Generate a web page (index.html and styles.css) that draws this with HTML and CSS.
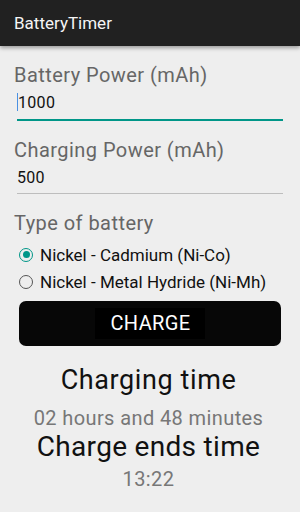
FILE: index.html
```html
<!DOCTYPE html>
<html lang="en">
<head>
<meta charset="UTF-8">
<title>BatteryTimer</title>
<link rel="stylesheet" href="styles.css">
</head>
<body>
<div class="actionbar">BatteryTimer</div>

<div class="content">
  <div class="label">Battery Power (mAh)</div>
  <div class="field active"><span class="cursor"></span>1000</div>

  <div class="label">Charging Power (mAh)</div>
  <div class="field">500</div>

  <div class="label">Type of battery</div>
  <div class="radios">
    <div class="radio checked"><span class="dot"></span>Nickel - Cadmium (Ni-Co)</div>
    <div class="radio"><span class="dot"></span>Nickel - Metal Hydride (Ni-Mh)</div>
  </div>

  <div class="button"><span class="buttontext">CHARGE</span></div>

  <div class="result">
    <div class="big">Charging time</div>
    <div class="small">02 hours and 48 minutes</div>
    <div class="big big2">Charge ends time</div>
    <div class="small small2">13:22</div>
  </div>
</div>
</body>
</html>
```

FILE: styles.css
```css
body{
  margin:0;
  background-color:#eeeeee;
  font-family:Roboto, "Liberation Sans", sans-serif;
  width:300px;
  height:512px;
  overflow:hidden;
}
.actionbar{
  height:46px;
  line-height:46px;
  background-color:#212121;
  color:#f5f5f5;
  font-size:17px;
  padding-left:14px;
  box-shadow:0 2px 4px rgba(0,0,0,0.35);
}
.content{
  padding:0 17px 0 14px;
}
.label{
  color:#666666;
  font-size:20px;
  line-height:24px;
  letter-spacing:0.45px;
  margin-top:17px;
}
.field{
  margin-left:3px;
  font-size:16px;
  line-height:20px;
  color:#111111;
  padding:6px 0 5px 0;
  border-bottom:1px solid #bdbdbd;
  letter-spacing:0.3px;
}
.field.active{
  border-bottom:2px solid #009688;
  padding-bottom:6px;
}
.cursor{
  display:inline-block;
  width:1px;
  height:18px;
  background-color:#4a90e2;
  vertical-align:-3px;
}
.radios{
  margin-top:6px;
}
.radio{
  display:flex;
  align-items:center;
  height:27px;
  font-size:17px;
  color:#111111;
  margin-left:5px;
}
.dot{
  width:12px;
  height:12px;
  border:1.5px solid #555555;
  border-radius:50%;
  margin-right:7px;
  box-sizing:content-box;
  position:relative;
}
.radio.checked .dot{
  border-color:#009688;
}
.radio.checked .dot::after{
  content:"";
  position:absolute;
  left:2.5px;
  top:2.5px;
  width:7px;
  height:7px;
  border-radius:50%;
  background-color:#009688;
}
.button{
  margin:6px 2px 0 5px;
  height:45px;
  background-color:#070707;
  border-radius:7px;
  display:flex;
  align-items:center;
  justify-content:center;
}
.buttontext{
  background-color:#000000;
  color:#ffffff;
  font-size:20px;
  letter-spacing:0.4px;
  padding:5px 14px 5px 15px;
  line-height:21px;
}
.result{
  text-align:center;
  margin-top:16px;
}
.big{
  font-size:27px;
  line-height:36px;
  color:#111111;
  letter-spacing:0.6px;
}
.big2{
  font-size:28px;
  letter-spacing:0.3px;
  margin-top:-4px;
}
.small{
  font-size:20px;
  line-height:30px;
  margin-top:5px;
  color:#777777;
  letter-spacing:0.4px;
}
.small2{
  margin-top:-1px;
}
```
